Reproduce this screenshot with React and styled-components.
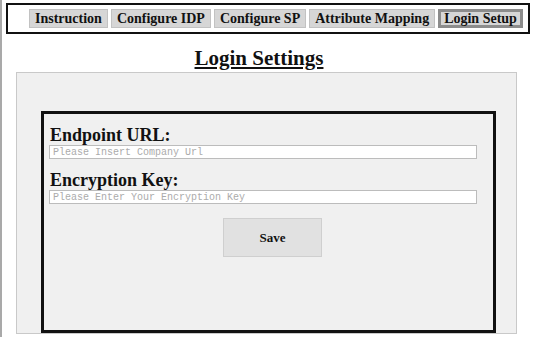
import React, { useState } from "react";
import styled, { createGlobalStyle } from "styled-components";

const GlobalStyle = createGlobalStyle`
  html, body {
    margin: 0;
    padding: 0;
    background: #ffffff;
  }
  body {
    font-family: "Liberation Serif", "Times New Roman", serif;
    color: #111;
  }
  * {
    box-sizing: border-box;
  }
`;

// Page frame with the grey strip on the left edge
const Page = styled.div`
  display: flex;
  flex-direction: column;
  height: 337px;
  width: 538px;
  border-left: 2px solid #a9a9a9;
  padding-left: 4px;
  overflow: hidden;
`;

const Nav = styled.nav`
  display: flex;
  align-items: center;
  gap: 3px;
  width: 524px;
  height: 31px;
  margin-top: 3px;
  padding-left: 21px;
  border: 2px solid #111;
`;

const Tab = styled.button`
  flex-shrink: 0;
  white-space: nowrap;
  height: 19px;
  padding: 0 ${(p) => (p.$active ? 3 : 5)}px;
  font-family: inherit;
  font-size: 14px;
  font-weight: bold;
  line-height: 1;
  color: #111;
  background: #d6d6d6;
  border: ${(p) => (p.$active ? "3px solid #8c8c8c" : "1px solid #c2c2c2")};
  cursor: pointer;
`;

const Content = styled.div`
  display: flex;
  flex-direction: column;
  flex: 1;
  width: 501px;
  margin-left: 10px;
  margin-bottom: 3px;
`;

const Title = styled.h2`
  margin: 13px 0 2px;
  padding-right: 15px;
  text-align: center;
  font-size: 21px;
  line-height: 23px;
  font-weight: bold;
  text-decoration: underline;
`;

const Panel = styled.section`
  display: flex;
  flex-direction: column;
  flex: 1;
  padding: 38px 20px 0 24px;
  background: #f0f0f0;
  border: 1px solid #c9c9c9;
`;

const FormBox = styled.form`
  display: flex;
  flex-direction: column;
  flex: 1;
  padding: 11px 16px 0 6px;
  border: 3px solid #111;
`;

const Label = styled.label`
  font-size: 18px;
  line-height: 20px;
  font-weight: bold;
  margin-top: ${(p) => p.$gap || 0}px;
`;

const Input = styled.input`
  width: 428px;
  height: 14px;
  margin-left: -1px;
  padding: 0 3px;
  font-family: "Liberation Mono", "Courier New", monospace;
  font-size: 10px;
  color: #333;
  background: #fff;
  border: 1px solid #bcbcbc;
  outline: none;

  &::placeholder {
    color: #ababab;
  }
`;

const ButtonRow = styled.div`
  display: flex;
  justify-content: center;
  padding-left: 18px;
  margin-top: 14px;
`;

const SaveButton = styled.button`
  width: 99px;
  height: 39px;
  font-family: inherit;
  font-size: 13px;
  font-weight: bold;
  color: #111;
  background: #e1e1e1;
  border: 1px solid #cfcfcf;
  cursor: pointer;
`;

const tabs = [
  "Instruction",
  "Configure IDP",
  "Configure SP",
  "Attribute Mapping",
  "Login Setup",
];

function App() {
  const [active, setActive] = useState("Login Setup");
  const [url, setUrl] = useState("");
  const [key, setKey] = useState("");

  return (
    <>
      <GlobalStyle />
      <Page>
        <Nav>
          {tabs.map((t) => (
            <Tab key={t} $active={t === active} onClick={() => setActive(t)}>
              {t}
            </Tab>
          ))}
        </Nav>
        <Content>
          <Title>Login Settings</Title>
          <Panel>
            <FormBox onSubmit={(e) => e.preventDefault()}>
              <Label htmlFor="endpoint">Endpoint URL:</Label>
              <Input
                id="endpoint"
                value={url}
                placeholder="Please Insert Company Url"
                onChange={(e) => setUrl(e.target.value)}
              />
              <Label htmlFor="enckey" $gap={11}>
                Encryption Key:
              </Label>
              <Input
                id="enckey"
                value={key}
                placeholder="Please Enter Your Encryption Key"
                onChange={(e) => setKey(e.target.value)}
              />
              <ButtonRow>
                <SaveButton type="submit">Save</SaveButton>
              </ButtonRow>
            </FormBox>
          </Panel>
        </Content>
      </Page>
    </>
  );
}

export default App;
